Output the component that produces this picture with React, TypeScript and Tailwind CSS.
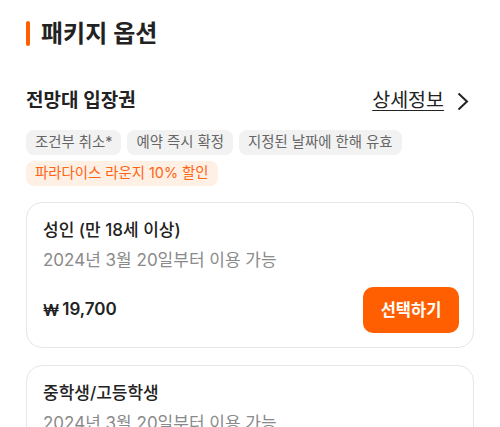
import React from "react";

const font = { fontFamily: '"Inter", "Noto Sans CJK KR", sans-serif' };

function Chip({ children, accent }: { children: React.ReactNode; accent?: boolean }) {
  return (
    <span
      className={
        "inline-flex h-[25px] items-center rounded-[8px] px-[9px] text-[14.4px] leading-none " +
        (accent ? "bg-[#fff0e6] text-[#ff6410]" : "bg-[#f2f2f2] text-[#666666]")
      }
    >
      {children}
    </span>
  );
}

function OptionCard({ title, showBottom }: { title: string; showBottom: boolean }) {
  return (
    <div className="rounded-[16px] border border-[#e6e6e6] bg-white pl-[16px] pr-[14px] pt-[14px] pb-[14px]">
      <div className="text-[17px] leading-[26px] font-medium text-[#222222]">{title}</div>
      <div className="mt-[4px] text-[17px] leading-[26px] text-[#8a8a8a]">2024년 3월 20일부터 이용 가능</div>
      {showBottom && (
        <div className="mt-[14px] flex items-center justify-between">
          <span className="flex items-center text-[17px] font-semibold text-[#222222]">
            <span className="mr-[3px] text-[16px]">₩</span>19,700
          </span>
          <button className="h-[46px] w-[96px] rounded-[10px] bg-[#ff5f00] text-[16.5px] font-semibold text-white">
            선택하기
          </button>
        </div>
      )}
    </div>
  );
}

export default function App() {
  return (
    <div className="h-[427px] w-[500px] overflow-hidden bg-white px-[26px] pt-[21px]" style={font}>
      <div className="flex items-center gap-[11px]">
        <div className="h-[25px] w-[4px] rounded-full bg-[#ff5f00]" />
        <h1 className="text-[24px] leading-[25px] font-semibold text-[#222222]">패키지 옵션</h1>
      </div>

      <div className="mt-[43px] flex h-[24px] items-center justify-between">
        <span className="text-[19px] font-semibold text-[#222222]">전망대 입장권</span>
        <div className="flex items-center gap-[13px] pr-[5px]">
          <span className="text-[19.5px] text-[#222222] underline underline-offset-[3px]">상세정보</span>
          <svg width="12" height="19" viewBox="0 0 12 19" fill="none">
            <polyline points="1.5,1.5 10,9.5 1.5,17.5" stroke="#222222" strokeWidth="2" strokeLinejoin="miter" />
          </svg>
        </div>
      </div>

      <div className="mt-[17px] flex flex-wrap gap-x-[6px] gap-y-[6px]">
        <Chip>조건부 취소*</Chip>
        <Chip>예약 즉시 확정</Chip>
        <Chip>지정된 날짜에 한해 유효</Chip>
        <Chip accent>파라다이스 라운지 10% 할인</Chip>
      </div>

      <div className="mt-[16px] flex flex-col gap-[17px]">
        <OptionCard title="성인 (만 18세 이상)" showBottom />
        <OptionCard title="중학생/고등학생" showBottom />
      </div>
    </div>
  );
}
